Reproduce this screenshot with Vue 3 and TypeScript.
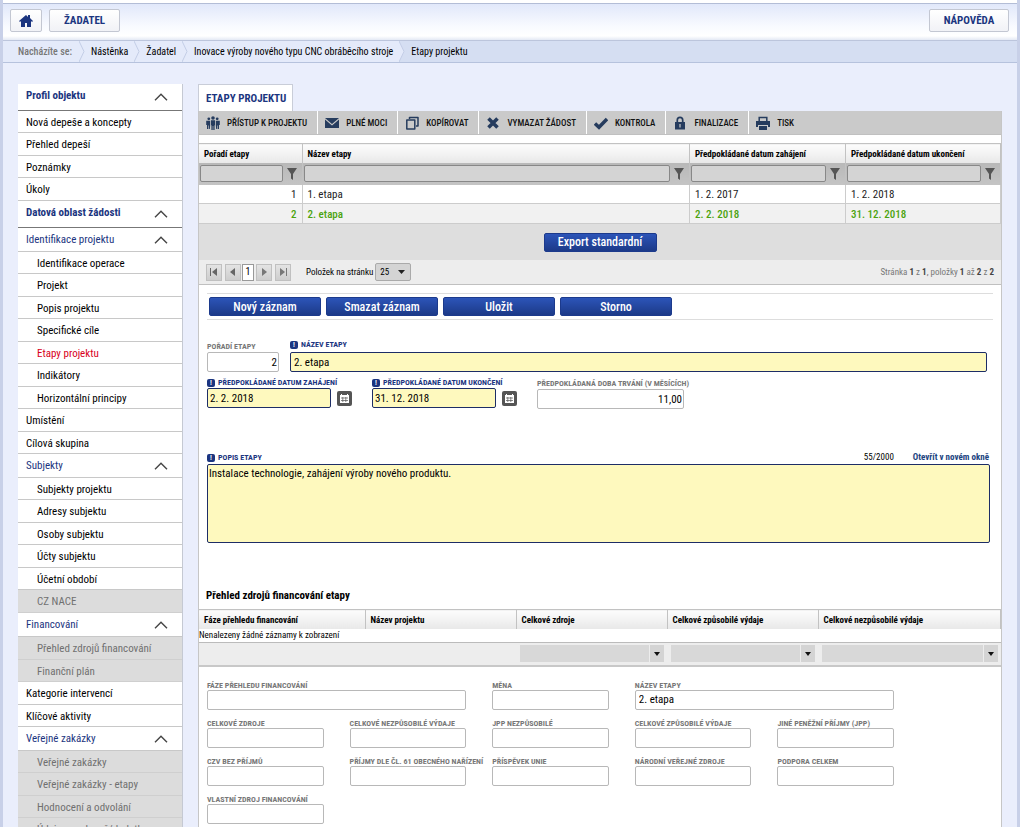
<script setup lang="ts">
import { ref } from 'vue'

type NavKind = 'root' | 'group' | 'item' | 'sub' | 'off'
interface NavEntry { label: string; kind: NavKind; current?: boolean }

const nav: NavEntry[] = [
  { label: 'Profil objektu', kind: 'root' },
  { label: 'Nová depeše a koncepty', kind: 'item' },
  { label: 'Přehled depeší', kind: 'item' },
  { label: 'Poznámky', kind: 'item' },
  { label: 'Úkoly', kind: 'item' },
  { label: 'Datová oblast žádosti', kind: 'root' },
  { label: 'Identifikace projektu', kind: 'group' },
  { label: 'Identifikace operace', kind: 'sub' },
  { label: 'Projekt', kind: 'sub' },
  { label: 'Popis projektu', kind: 'sub' },
  { label: 'Specifické cíle', kind: 'sub' },
  { label: 'Etapy projektu', kind: 'sub', current: true },
  { label: 'Indikátory', kind: 'sub' },
  { label: 'Horizontální principy', kind: 'sub' },
  { label: 'Umístění', kind: 'item' },
  { label: 'Cílová skupina', kind: 'item' },
  { label: 'Subjekty', kind: 'group' },
  { label: 'Subjekty projektu', kind: 'sub' },
  { label: 'Adresy subjektu', kind: 'sub' },
  { label: 'Osoby subjektu', kind: 'sub' },
  { label: 'Účty subjektu', kind: 'sub' },
  { label: 'Účetní období', kind: 'sub' },
  { label: 'CZ NACE', kind: 'off' },
  { label: 'Financování', kind: 'group' },
  { label: 'Přehled zdrojů financování', kind: 'off' },
  { label: 'Finanční plán', kind: 'off' },
  { label: 'Kategorie intervencí', kind: 'item' },
  { label: 'Klíčové aktivity', kind: 'item' },
  { label: 'Veřejné zakázky', kind: 'group' },
  { label: 'Veřejné zakázky', kind: 'off' },
  { label: 'Veřejné zakázky - etapy', kind: 'off' },
  { label: 'Hodnocení a odvolání', kind: 'off' },
  { label: 'Údaje o smlouvě/dodatku', kind: 'off' },
]

const crumbs = ['Nástěnka', 'Žadatel', 'Inovace výroby nového typu CNC obráběcího stroje', 'Etapy projektu']

const tools = [
  { id: 'people', label: 'PŘÍSTUP K PROJEKTU' },
  { id: 'mail', label: 'PLNÉ MOCI' },
  { id: 'copy', label: 'KOPÍROVAT' },
  { id: 'cross', label: 'VYMAZAT ŽÁDOST' },
  { id: 'check', label: 'KONTROLA' },
  { id: 'lock', label: 'FINALIZACE' },
  { id: 'print', label: 'TISK' },
]

const stageColumns = ['Pořadí etapy', 'Název etapy', 'Předpokládané datum zahájení', 'Předpokládané datum ukončení']
const stages = [
  { no: 1, name: '1. etapa', from: '1. 2. 2017', to: '1. 2. 2018' },
  { no: 2, name: '2. etapa', from: '2. 2. 2018', to: '31. 12. 2018' },
]
const selected = ref(2)

const actions = ['Nový záznam', 'Smazat záznam', 'Uložit', 'Storno']

const order = ref('2')
const stageName = ref('2. etapa')
const dateFrom = ref('2. 2. 2018')
const dateTo = ref('31. 12. 2018')
const months = ref('11,00')
const description = ref('Instalace technologie, zahájení výroby nového produktu.')

const fundColumns = ['Fáze přehledu financování', 'Název projektu', 'Celkové zdroje', 'Celkové způsobilé výdaje', 'Celkové nezpůsobilé výdaje']

const fundFields = [
  { id: 'f1', label: 'FÁZE PŘEHLEDU FINANCOVÁNÍ', value: '', wide: true },
  { id: 'f2', label: 'MĚNA', value: '', wide: false },
  { id: 'f3', label: 'NÁZEV ETAPY', value: '2. etapa', wide: true },
  { id: 'f4', label: 'CELKOVÉ ZDROJE', value: '', wide: false },
  { id: 'f5', label: 'CELKOVÉ NEZPŮSOBILÉ VÝDAJE', value: '', wide: false },
  { id: 'f6', label: 'JPP NEZPŮSOBILÉ', value: '', wide: false },
  { id: 'f7', label: 'CELKOVÉ ZPŮSOBILÉ VÝDAJE', value: '', wide: false },
  { id: 'f8', label: 'JINÉ PENĚŽNÍ PŘÍJMY (JPP)', value: '', wide: false },
  { id: 'f9', label: 'CZV BEZ PŘÍJMŮ', value: '', wide: false },
  { id: 'f10', label: 'PŘÍJMY DLE ČL. 61 OBECNÉHO NAŘÍZENÍ', value: '', wide: false },
  { id: 'f11', label: 'PŘÍSPĚVEK UNIE', value: '', wide: false },
  { id: 'f12', label: 'NÁRODNÍ VEŘEJNÉ ZDROJE', value: '', wide: false },
  { id: 'f13', label: 'PODPORA CELKEM', value: '', wide: false },
  { id: 'f14', label: 'VLASTNÍ ZDROJ FINANCOVÁNÍ', value: '', wide: false },
]
</script>

<template>
  <div class="page">
    <header class="topbar">
      <button type="button" class="top-btn home" aria-label="Domů">
        <svg width="14" height="12" viewBox="0 0 14 12"><path d="M7 0 0 6l1 1 1-1v6h4V8h2v4h4V6l1 1 1-1-3-3V0H9v2z" fill="#1b3580" /></svg>
      </button>
      <button type="button" class="top-btn applicant">ŽADATEL</button>
      <button type="button" class="top-btn help">NÁPOVĚDA</button>
    </header>
    <nav class="crumbs" aria-label="Drobečková navigace">
      <span class="where">Nacházíte se:</span>
      <template v-for="(c, i) in crumbs" :key="c">
        <svg class="sep" :class="{ 'sep-last': i === crumbs.length - 1 }" width="6" height="21" viewBox="0 0 6 21">
          <path v-if="i === crumbs.length - 1" d="M0 0 5 10.500 0 21H6V0z" fill="#d5def2" />
          <path d="M0 0 5 10.500 0 21" fill="none" stroke="#c3cde6" />
        </svg>
        <a href="#" :class="{ last: i === crumbs.length - 1 }">{{ c }}</a>
      </template>
    </nav>

    <div class="body">
      <nav class="side" aria-label="Menu žádosti">
        <a v-for="(n, i) in nav" :key="i" href="#" :class="[n.kind, { current: n.current }]">
          <span>{{ n.label }}</span>
          <svg v-if="n.kind === 'root' || n.kind === 'group'" width="14" height="8" viewBox="0 0 14 8"><path d="M1 7.300 7 1.300l6 6" fill="none" stroke="#444" stroke-width="1.400" /></svg>
        </a>
      </nav>

      <main class="main">
        <h1 class="tab">ETAPY PROJEKTU</h1>
        <div class="panel">
          <div class="toolbar">
            <button v-for="t in tools" :key="t.id" type="button">
              <svg width="14" height="14" viewBox="0 0 14 14" fill="#263c5e">
                <g v-if="t.id === 'people'">
                  <circle cx="7" cy="2" r="1.800" /><circle cx="2.800" cy="2.800" r="1.400" /><circle cx="11.200" cy="2.800" r="1.400" />
                  <path d="M5 4.300h4v5H8.600V14H7.300v-4h-.6v4H5.400V9.300H5zM.2 4.800h4v4.500l-.4 3.700H2.600V9.500H2V13H1V9H.2zM9.800 4.800h4V9H13v4h-1V9.500h-.6V13h-1.200l-.4-3.700z" />
                </g>
                <path v-else-if="t.id === 'mail'" d="M0 2h14L7 8zM0 3.500 7 9.500l7-6V12H0z" />
                <path v-else-if="t.id === 'copy'" d="M1.800 4h8v9h-8zM4.500 3V1.500H13V10h-2" fill="none" stroke="#263c5e" stroke-width="1.500" stroke-linejoin="round" />
                <path v-else-if="t.id === 'cross'" d="M2.500 2.500l9 9M11.500 2.500l-9 9" fill="none" stroke="#263c5e" stroke-width="3.600" />
                <path v-else-if="t.id === 'check'" d="M1 7.500 5 11.300 13 3" fill="none" stroke="#263c5e" stroke-width="3.400" />
                <g v-else-if="t.id === 'lock'">
                  <path d="M4.300 7V4a2.700 2.700 0 0 1 5.400 0v3" fill="none" stroke="#263c5e" stroke-width="1.700" />
                  <path d="M2 6h10v7.500H2z" /><path d="M6.400 8h1.200v3.500H6.400z" fill="#ccc" />
                </g>
                <g v-else>
                  <path d="M3.200 5.500v-4h7.600v4" fill="none" stroke="#263c5e" stroke-width="1.500" />
                  <path d="M0 5h14v6h-2V9H2v2H0zM3 10h8v4H3z" />
                </g>
              </svg>
              <span>{{ t.label }}</span>
            </button>
          </div>

          <table class="grid stages">
            <colgroup><col class="c-no" /><col /><col class="c-date" /><col class="c-end" /></colgroup>
            <thead>
              <tr><th v-for="c in stageColumns" :key="c" scope="col">{{ c }}</th></tr>
              <tr class="filters">
                <td v-for="c in stageColumns" :key="c">
                  <div class="filter">
                    <input type="text" :aria-label="'Filtr: ' + c" />
                    <button type="button" :aria-label="'Filtrovat: ' + c"><svg width="10" height="12" viewBox="0 0 10 12"><path d="M0 0h10L6 6v6L4 10.500V6z" fill="#555" /></svg></button>
                  </div>
                </td>
              </tr>
            </thead>
            <tbody>
              <tr v-for="s in stages" :key="s.no" :class="{ selected: s.no === selected }" @click="selected = s.no">
                <td class="num">{{ s.no }}</td><td>{{ s.name }}</td><td>{{ s.from }}</td><td>{{ s.to }}</td>
              </tr>
            </tbody>
          </table>
          <div class="export"><button type="button" class="blue">Export standardní</button></div>
          <div class="pager">
            <button type="button" aria-label="První"><svg width="8" height="8" viewBox="0 0 8 8"><path d="M0 0h1v8H0zM7 0v8L2 4z" fill="#666" /></svg></button>
            <button type="button" class="prev" aria-label="Předchozí"><svg width="8" height="8" viewBox="0 0 8 8"><path d="M6 0v8L1 4z" fill="#666" /></svg></button>
            <button type="button" class="page-no">1</button>
            <button type="button" class="next" aria-label="Další"><svg width="8" height="8" viewBox="0 0 8 8"><path d="M2 0v8l5-4z" fill="#777" /></svg></button>
            <button type="button" aria-label="Poslední"><svg width="8" height="8" viewBox="0 0 8 8"><path d="M7 0h1v8H7zM1 0v8l5-4z" fill="#777" /></svg></button>
            <label for="size">Položek na stránku</label>
            <div class="size">
              <select id="size"><option>25</option><option>50</option></select>
              <svg width="7" height="4" viewBox="0 0 7 4"><path d="M0 0h7L3.500 4z" fill="#222" /></svg>
            </div>
            <p>Stránka <b>1</b> z <b>1</b>, položky <b>1</b> až <b>2</b> z <b>2</b></p>
          </div>

          <form class="detail" @submit.prevent>
            <div class="actions">
              <button v-for="a in actions" :key="a" type="button" class="blue">{{ a }}</button>
            </div>
            <div class="row first">
              <div class="field w-order"><label for="order">POŘADÍ ETAPY</label><input id="order" v-model="order" class="right" type="text" /></div>
              <div class="field grow req"><label for="name"><i>!</i>NÁZEV ETAPY</label><input id="name" v-model="stageName" type="text" /></div>
            </div>
            <div class="row second">
              <div class="field date req">
                <label for="from"><i>!</i>PŘEDPOKLÁDANÉ DATUM ZAHÁJENÍ</label>
                <div class="pick"><input id="from" v-model="dateFrom" type="text" />
                  <button type="button" aria-label="Kalendář zahájení"><svg width="9" height="9" viewBox="0 0 9 9"><path d="M0 1h1V0h1v1h5V0h1v1h1v8H0z" fill="#fff" /><path d="M1 4h7M1 6.500h7M2.800 3v5M5.800 3v5" stroke="#555" stroke-width=".7" /></svg></button>
                </div>
              </div>
              <div class="field date req">
                <label for="to"><i>!</i>PŘEDPOKLÁDANÉ DATUM UKONČENÍ</label>
                <div class="pick"><input id="to" v-model="dateTo" type="text" />
                  <button type="button" aria-label="Kalendář ukončení"><svg width="9" height="9" viewBox="0 0 9 9"><path d="M0 1h1V0h1v1h5V0h1v1h1v8H0z" fill="#fff" /><path d="M1 4h7M1 6.500h7M2.800 3v5M5.800 3v5" stroke="#555" stroke-width=".7" /></svg></button>
                </div>
              </div>
              <div class="field w-months"><label for="months">PŘEDPOKLÁDANÁ DOBA TRVÁNÍ (V MĚSÍCÍCH)</label><input id="months" v-model="months" class="right" type="text" /></div>
            </div>
            <div class="desc req">
              <div class="desc-head">
                <label for="desc"><i>!</i>POPIS ETAPY</label>
                <span>55/2000</span>
                <a href="#">Otevřít v novém okně</a>
              </div>
              <textarea id="desc" v-model="description"></textarea>
            </div>
          </form>

          <h2>Přehled zdrojů financování etapy</h2>
          <table class="grid funds">
            <colgroup><col class="c-phase" /><col class="c-mid" /><col class="c-mid" /><col class="c-mid" /><col /></colgroup>
            <thead><tr><th v-for="c in fundColumns" :key="c" scope="col">{{ c }}</th></tr></thead>
            <tbody><tr><td colspan="5" class="empty">Nenalezeny žádné záznamy k zobrazení</td></tr></tbody>
            <tfoot>
              <tr>
                <td></td><td></td>
                <td v-for="c in fundColumns.slice(2)" :key="c">
                  <div class="combo">
                    <select :aria-label="'Souhrn: ' + c"><option></option></select>
                    <span><svg width="6" height="4" viewBox="0 0 6 4"><path d="M0 0h6L3 4z" fill="#111" /></svg></span>
                  </div>
                </td>
              </tr>
            </tfoot>
          </table>

          <form class="fund-form" @submit.prevent>
            <div v-for="f in fundFields" :key="f.id" class="field" :class="{ wide: f.wide }">
              <label :for="f.id">{{ f.label }}</label>
              <input :id="f.id" type="text" :value="f.value" />
            </div>
          </form>
        </div>
      </main>
    </div>
  </div>
</template>

<style>
html { scrollbar-width: none; }
body { margin: 0; background: #eaeefc; }
</style>

<style scoped>
.page {
  box-sizing: border-box;
  min-height: 100vh;
  border: 0 solid #c8d0e8;
  border-width: 0 3px;
  background: #eaeefc;
  color: #000;
  font-family: "Roboto Condensed", "Liberation Sans Narrow", Roboto, sans-serif;
  font-size: 11px;
  line-height: 14px;
}
.page *, .page *::before { box-sizing: border-box; }
button, input, select, textarea { margin: 0; padding: 0; border: 0; background: none; color: inherit; font: inherit; }
button { cursor: pointer; }
a { color: inherit; text-decoration: none; }
svg { display: block; flex: none; }

.topbar {
  display: flex;
  align-items: flex-start;
  gap: 7px;
  height: 41px;
  padding: 9px 8px 0 7px;
  border-bottom: 1px solid #bcc5dc;
  background: linear-gradient(#fff 3px, #b3bdd6 3px, #b3bdd6 4px, #e1e8fa 4px, #f8faff 26px, #fff 36px, #e4e9f5 40px);
}
.top-btn {
  display: flex;
  align-items: center;
  justify-content: center;
  height: 23px;
  padding-top: 1px;
  border: 1px solid #c3c7d2;
  border-radius: 2px;
  background: linear-gradient(#fff, #f1f2f6);
  color: #1b3580;
  font-size: 11px;
  font-weight: 700;
}
.home { width: 32px; }
.applicant { width: 71px; }
.help { width: 80px; margin-left: auto; }

.crumbs {
  display: flex;
  align-items: center;
  height: 22px;
  padding-left: 15px;
  border-bottom: 1px solid #b6c2dd;
  background: #e4eafa;
  font-size: 10px;
  white-space: nowrap;
}
.where { margin-right: 1px; color: #777; font-weight: 500; }
.sep { margin: 0 6px; }
.sep-last { margin-right: 0; }
.crumbs .last { flex: 1; padding-left: 6px; background: #d5def2; line-height: 21px; }

.body { display: flex; align-items: flex-start; gap: 15px; padding: 21px 15px 20px 15px; }

.side { flex: none; width: 165px; border-right: 1px solid #c5c9d3; background: #fff; }
.side a {
  display: flex;
  align-items: center;
  justify-content: space-between;
  height: 23px;
  padding: 2px 14px 0 8px;
  border-bottom: 1px solid #c8c8c8;
  white-space: nowrap;
}
.side a:nth-child(even) { height: 22px; }
.side a.root { height: 27px; padding: 0 14px 3px 8px; border-bottom-color: #777; color: #1b3580; font-weight: 700; }
.side a.root svg { margin-top: 2px; }
.side a.group { height: 24px; padding-top: 0; color: #1b3580; }
.side a.sub, .side a.off { padding-left: 19px; }
.side a.off { border-bottom-color: #cfcfcf; background: #dcdcdc; color: #707070; }
.side a.current { color: #d8001c; }

.main { flex: 1; min-width: 0; }
.tab {
  display: flex;
  align-items: center;
  width: 95px;
  height: 27px;
  margin: 0;
  padding: 1px 0 0 7px;
  border: 1px solid #c9cdd8;
  border-bottom: 0;
  background: #fff;
  color: #1b3580;
  font-size: 11px;
  white-space: nowrap;
}
.panel { border: 1px solid #c6c6c6; border-top: 0; background: #fff; }

.toolbar { display: flex; height: 24px; margin-bottom: 8px; border-bottom: 1px solid #c0c0c0; background: #cacaca; }
.toolbar button {
  display: flex;
  align-items: center;
  gap: 7px;
  padding: 0 10px 0 7px;
  border-right: 1px solid #fff;
  font-size: 9px;
  font-weight: 500;
  color: #111;
  white-space: nowrap;
}
.toolbar button:last-child { border-right: 0; }

.grid { width: 100%; border-collapse: collapse; table-layout: fixed; }
.grid th {
  height: 19px;
  padding: 1px 5px 0;
  border: 0 solid #c2c2c2;
  border-width: 1px 1px 0 0;
  background: linear-gradient(#fcfcfc, #e8e8e8);
  font-size: 9px;
  font-weight: 700;
  line-height: 14px;
  text-align: left;
  white-space: nowrap;
}
.c-no { width: 103px; }
.c-date { width: 156px; }
.c-end { width: 155px; }
.filters td { height: 22px; padding: 0 4px 0 1px; background: linear-gradient(#b8b8b8, #c4c4c4); border-right: 1px solid #c2c2c2; }
.filter { display: flex; align-items: center; gap: 3px; }
.filter input { flex: 1; min-width: 0; height: 17px; border: 1px solid #888; border-radius: 2px; background: #d4d4d4; }
.filter button { display: flex; justify-content: center; width: 12px; }
.stages tbody td { height: 19px; padding: 2px 5px 0; border-right: 1px solid #ccc; border-bottom: 1px solid #ccc; color: #222; }
.stages tbody td.num { text-align: right; }
.stages tbody tr.selected td { height: 20px; background: #f1f1f1; color: #4ba30e; font-weight: 500; }

.blue {
  width: 113px;
  height: 19px;
  border: 1px solid #1c3a8c;
  border-radius: 2px;
  background: linear-gradient(#2c54b8, #1c3a88);
  color: #fff;
  font-size: 12px;
  font-weight: 500;
  line-height: 16px;
}
.export { display: flex; align-items: center; justify-content: center; height: 36px; background: #dedede; }

.pager { display: flex; align-items: center; height: 25px; padding: 0 7px; border-bottom: 1px solid #c0c0c0; background: #ededed; font-size: 9px; }
.pager button { display: flex; align-items: center; justify-content: center; width: 16px; height: 17px; border: 1px solid #c0c0c0; background: linear-gradient(#e4e4e4, #cdcdcd); }
.pager .prev { margin: 0 1px 0 3px; }
.pager .page-no { width: 12px; background: #fff; border-color: #999; font-size: 10px; }
.pager .next { margin: 0 3px 0 2px; }
.pager label { margin: 0 2px 0 15px; }
.size { display: grid; align-items: center; }
.size select { grid-area: 1 / 1; width: 36px; height: 18px; padding-left: 4px; border: 1px solid #aaa; border-radius: 2px; background: #d4d4d4; appearance: none; }
.size svg { grid-area: 1 / 1; justify-self: end; margin-right: 6px; pointer-events: none; }
.pager p { margin: 0 0 0 auto; color: #777; }
.pager b { color: #444; }

.detail { padding: 8px; }
.actions { display: flex; gap: 5px; height: 27px; padding: 3px 2px; border: 1px solid #ddd; border-width: 1px 0; }
.actions .blue { width: 112px; }
.row { display: flex; align-items: flex-end; }
.first { gap: 11px; margin: 18px 6px 0 0; }
.second { gap: 20px; margin-top: 4px; align-items: flex-start; }
.field label, .desc label { display: block; height: 12px; color: #777; font-size: 8px; font-weight: 700; line-height: 13px; white-space: nowrap; }
.field input { display: block; width: 100%; height: 20px; padding: 0 3px; border: 1px solid #b8b8b8; border-radius: 2px; background: #fff; }
.field input.right { padding: 0 1px; text-align: right; }
.w-order { width: 72px; }
.w-months { width: 147px; padding-top: 1px; }
.grow { flex: 1; }
.req.grow label { height: 14px; }
.date { width: 145px; }
.pick { display: flex; gap: 6px; align-items: center; }
.pick input { flex: 1; min-width: 0; padding: 0 2px; }
.pick button { display: flex; align-items: center; justify-content: center; flex: none; width: 15px; height: 15px; border-radius: 2px; background: #555; }
.field.req label, .desc.req label { color: #1b3580; }
.field.req input, .req textarea { border-color: #1d2d66; background: #fef9be; }
.req i { display: inline-block; width: 8px; height: 8px; margin-right: 3px; border-radius: 2px; background: #1b3580; color: #fff; font-size: 7px; font-style: normal; line-height: 8px; text-align: center; }
.desc { margin: 41px 3px 0 0; }
.desc-head { display: flex; align-items: center; font-size: 9px; }
.desc-head span { margin-left: auto; }
.desc-head a { margin: 0 1px 0 19px; color: #1b4480; font-weight: 700; }
textarea { display: block; width: 100%; height: 79px; padding: 2px 1px; border: 1px solid #1d2d66; border-radius: 2px; outline: 0; resize: none; }
h2 { margin: 37px 7px 5px; font-size: 11px; line-height: 16px; }

.c-phase { width: 166px; }
.c-mid { width: 151px; }
.empty { height: 14px; padding: 0; border-bottom: 1px solid #bbb; font-size: 9px; line-height: 13px; }
.funds tfoot td { height: 23px; padding: 0 3px 0 4px; border-bottom: 2px solid #c8c8c8; background: #ededed; }
.combo { display: flex; gap: 1px; }
.combo select { flex: 1; min-width: 0; height: 17px; background: #d8d8d8; appearance: none; }
.combo span { display: flex; align-items: center; justify-content: center; width: 14px; height: 17px; background: #d4d4d4; }

.fund-form { display: grid; grid-template-columns: repeat(5, minmax(0, 1fr)); column-gap: 26px; row-gap: 7px; max-width: 703px; padding: 12px 8px; }
.fund-form .wide { grid-column: span 2; }
.fund-form label { height: 11px; }
</style>
